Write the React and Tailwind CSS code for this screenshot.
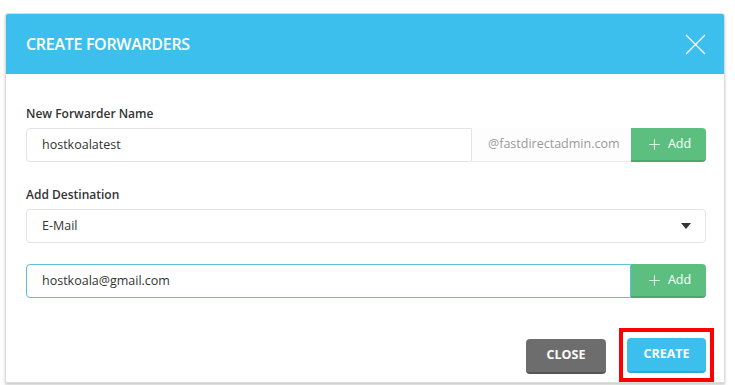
import { Plus } from 'lucide-react'

function AddButton() {
  return (
    <button
      type="button"
      className="flex h-[34px] w-[75px] shrink-0 items-center justify-center gap-[5px] rounded-r-[4px] border-b-2 border-[#4aa86b] bg-[#5cbf7f] text-[12.5px] text-white"
    >
      <Plus className="h-[17px] w-[17px]" strokeWidth={1.1} />
      Add
    </button>
  )
}

export default function App() {
  return (
    <div className="h-[385px] w-[735px] bg-white pl-[5px] pt-[13px] font-['Open_Sans',sans-serif]">
      <div className="h-[370px] w-[720px] overflow-hidden rounded-t-[3px] border border-[#dcdcdc] bg-white shadow-[0_2px_3px_rgba(0,0,0,0.2)]">
        <div className="flex h-[60px] items-center justify-between bg-[#3dbfee] pl-[20px] pr-[18px]">
          <h2 className="text-[16px] font-semibold tracking-[-0.3px] text-white">CREATE FORWARDERS</h2>
          <svg width="21" height="21" viewBox="0 0 21 21" className="text-white">
            <path d="M1 1 L20 20 M20 1 L1 20" stroke="currentColor" strokeWidth="1.3" fill="none" />
          </svg>
        </div>

        <div className="pl-[20px] pr-[18px] pt-[31px]">
          <label className="block text-[12px] font-semibold text-[#333]">New Forwarder Name</label>
          <div className="mt-[5px] flex h-[34px]">
            <div className="flex flex-1 items-center rounded-l-[4px] border border-[#e3e3e3] px-[15px] text-[12.5px] text-[#333]">
              hostkoalatest
            </div>
            <div className="flex w-[159px] items-center border-b border-[#ececec] bg-[#fdfdfd] pl-[16px] text-[12.5px] text-[#9a9a9a]">
              @fastdirectadmin.com
            </div>
            <AddButton />
          </div>

          <label className="mt-[24px] block text-[12px] font-semibold text-[#333]">Add Destination</label>
          <div className="mt-[5px] flex h-[34px] items-center justify-between rounded-[4px] border border-[#e3e3e3] pl-[15px] pr-[14px] text-[12.5px] text-[#333]">
            E-Mail
            <svg width="10" height="6" viewBox="0 0 10 6">
              <path d="M0 0 H10 L5 6 Z" fill="#333" />
            </svg>
          </div>

          <div className="mt-[21px] flex h-[34px]">
            <div className="flex flex-1 items-center rounded-l-[4px] border border-[#5bc0de] px-[15px] text-[12.5px] text-[#333]">
              hostkoala@gmail.com
            </div>
            <AddButton />
          </div>

          <div className="mt-[30px] flex justify-end gap-[13px]">
            <button
              type="button"
              className="mt-[11px] h-[35px] w-[80px] rounded-[4px] border-b-2 border-[#555] bg-[#6d6d6d] text-[12.5px] font-bold text-white"
            >
              CLOSE
            </button>
            <div className="mr-[-8px] border-[4px] border-[#ff0000] px-[4px] pb-[5px] pt-[6px]">
              <button
                type="button"
                className="h-[35px] w-[79px] rounded-[4px] border-b-2 border-[#2ea6d6] bg-[#3dbfee] text-[12.5px] font-bold text-white"
              >
                CREATE
              </button>
            </div>
          </div>
        </div>
      </div>
    </div>
  )
}
